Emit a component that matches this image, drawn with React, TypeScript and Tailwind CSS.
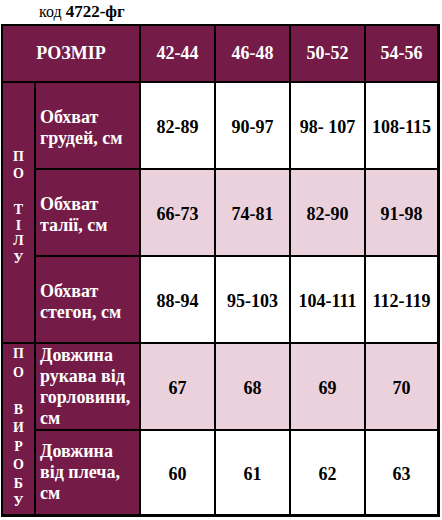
const sizes = ["42-44", "46-48", "50-52", "54-56"];

type Row = {
  label: string[];
  values: string[];
  pink: boolean;
  shift: boolean;
};

const rows: Row[] = [
  { label: ["Обхват", "грудей, см"], values: ["82-89", "90-97", "98- 107", "108-115"], pink: false, shift: true },
  { label: ["Обхват", "талії, см"], values: ["66-73", "74-81", "82-90", "91-98"], pink: true, shift: true },
  { label: ["Обхват", "стегон, см"], values: ["88-94", "95-103", "104-111", "112-119"], pink: false, shift: true },
  { label: ["Довжина", "рукава від", "горловини,", "см"], values: ["67", "68", "69", "70"], pink: true, shift: false },
  { label: ["Довжина", "від плеча,", "см"], values: ["60", "61", "62", "63"], pink: false, shift: false },
];

function Label({ row }: { row: Row }) {
  return (
    <div
      className={`flex flex-col justify-center bg-[#741b47] pl-[4px] text-[18px] leading-[21px] font-bold text-white ${
        row.shift ? "pt-[5px]" : ""
      }`}
    >
      {row.label.map((l, i) => (
        <div key={i} className="whitespace-nowrap">
          {l}
        </div>
      ))}
    </div>
  );
}

function Values({ row }: { row: Row }) {
  return (
    <>
      {row.values.map((v, i) => (
        <div
          key={i}
          className={`flex items-center justify-center pt-[4px] text-[18px] font-bold text-black ${
            row.pink ? "bg-[#ead1dc]" : "bg-white"
          }`}
        >
          {v}
        </div>
      ))}
    </>
  );
}

export default function App() {
  return (
    <div className="h-[520px] w-[442px] bg-white font-['Liberation_Serif','Times_New_Roman',serif]">
      <div className="h-[24px] pl-[39px] text-[16px] leading-[24px] text-black">
        код <span className="text-[17px] font-bold">4722-фг</span>
      </div>

      <div className="ml-px grid w-[439px] grid-cols-[31px_103px_73px_73px_73px_71px] grid-rows-[55px_85px_85px_85px_85px_83px] gap-[2px] bg-black pt-[2px] pr-[3px] pb-[3px] pl-[2px]">
        <div className="col-span-2 flex items-center justify-center bg-[#741b47] text-[18px] font-bold text-white">
          РОЗМІР
        </div>
        {sizes.map((s) => (
          <div
            key={s}
            className="flex items-center justify-center bg-[#741b47] text-[18px] font-bold text-white"
          >
            {s}
          </div>
        ))}

        {/* ПО ТІЛУ */}
        <div className="row-span-3 flex flex-col items-center bg-[#741b47] pt-[66px] text-[14px] leading-[15.5px] font-bold text-white">
          <div>П</div>
          <div className="mt-px">О</div>
          <div className="mt-[21px]">Т</div>
          <div>І</div>
          <div>Л</div>
          <div className="mt-[2px]">У</div>
        </div>
        <Label row={rows[0]} />
        <Values row={rows[0]} />
        <Label row={rows[1]} />
        <Values row={rows[1]} />
        <Label row={rows[2]} />
        <Values row={rows[2]} />

        {/* ПО ВИРОБУ */}
        <div className="row-span-2 flex flex-col items-center bg-[#741b47] pt-[1px] text-[14px] leading-[18.5px] font-bold text-white">
          <div>П</div>
          <div>О</div>
          <div>&nbsp;</div>
          <div>В</div>
          <div>И</div>
          <div>Р</div>
          <div>О</div>
          <div>Б</div>
          <div>У</div>
        </div>
        <Label row={rows[3]} />
        <Values row={rows[3]} />
        <Label row={rows[4]} />
        <Values row={rows[4]} />
      </div>
    </div>
  );
}
